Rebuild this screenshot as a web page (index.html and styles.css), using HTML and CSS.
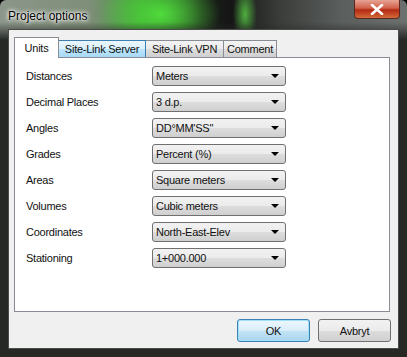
FILE: index.html
```html
<!DOCTYPE html>
<html lang="en">
<head>
    <meta charset="UTF-8">
    <title>Project options</title>
    <link rel="stylesheet" href="styles.css">
</head>
<body class="page">
<div class="window">
    <div class="titlebar">
        <span class="title">Project options</span>
        <div class="close-btn">
            <svg width="14" height="11" viewBox="0 0 14 11">
                <path d="M2 1 L12 10 M12 1 L2 10" stroke="#fff" stroke-width="2.6" stroke-linecap="round"/>
            </svg>
        </div>
    </div>
    <div class="client">
        <div class="tabs">
            <span class="tab tab-active">Units</span>
            <span class="tab tab-hover tab-server">Site-Link Server</span>
            <span class="tab tab-vpn">Site-Link VPN</span>
            <span class="tab tab-comment">Comment</span>
        </div>
        <div class="panel">
            <div class="row">
                <span class="label">Distances</span>
                <div class="combo"><span>Meters</span><i class="arrow"></i></div>
            </div>
            <div class="row">
                <span class="label">Decimal Places</span>
                <div class="combo"><span>3 d.p.</span><i class="arrow"></i></div>
            </div>
            <div class="row">
                <span class="label">Angles</span>
                <div class="combo"><span>DD°MM'SS"</span><i class="arrow"></i></div>
            </div>
            <div class="row">
                <span class="label">Grades</span>
                <div class="combo"><span>Percent (%)</span><i class="arrow"></i></div>
            </div>
            <div class="row">
                <span class="label">Areas</span>
                <div class="combo"><span>Square meters</span><i class="arrow"></i></div>
            </div>
            <div class="row">
                <span class="label">Volumes</span>
                <div class="combo"><span>Cubic meters</span><i class="arrow"></i></div>
            </div>
            <div class="row">
                <span class="label">Coordinates</span>
                <div class="combo"><span>North-East-Elev</span><i class="arrow"></i></div>
            </div>
            <div class="row">
                <span class="label">Stationing</span>
                <div class="combo"><span>1+000.000</span><i class="arrow"></i></div>
            </div>
        </div>
        <div class="buttons">
            <button class="btn btn-default">OK</button>
            <button class="btn">Avbryt</button>
        </div>
    </div>
</div>
</body>
</html>
```

FILE: styles.css
```css
.page {
    margin: 0;
    background: #000;
}

.window {
    width: 407px;
    height: 357px;
    box-sizing: border-box;
    padding: 0 8px 8px 8px;
    display: flex;
    flex-direction: column;
    background:
        linear-gradient(to bottom, rgba(0, 0, 0, 0) 0, rgba(0, 0, 0, 0) 22px, #262826 40px),
        radial-gradient(ellipse 12px 30px at 245px 14px, rgba(90, 210, 70, 0.8), rgba(90, 210, 70, 0) 100%),
        radial-gradient(ellipse 60px 40px at 160px 14px, rgba(80, 220, 60, 1), rgba(80, 220, 60, 0) 100%),
        linear-gradient(to right, #8c968a 0, #7e8e78 90px, #3f9a35 140px, #1e2a1c 200px, #141414 230px, #3a3d3a 280px, #5a5e5c 340px, #6c706e 407px);
    border-radius: 6px 6px 0 0;
    font-family: "Liberation Sans", Arial, sans-serif;
}

.titlebar {
    height: 29px;
    display: flex;
    align-items: flex-start;
    justify-content: space-between;
}

.title {
    margin-top: 9px;
    font-size: 12px;
    color: #000;
    text-shadow: 0 0 6px #fff, 0 0 4px #fff, 0 0 2px #fff;
}

.close-btn {
    width: 46px;
    height: 19px;
    margin-right: -1px;
    box-sizing: border-box;
    border: 1px solid #5a2a22;
    border-top: none;
    border-radius: 0 0 4px 4px;
    background: linear-gradient(to bottom, #e8a394 0, #d0614c 45%, #b42a12 55%, #d36a3a 100%);
    display: flex;
    align-items: center;
    justify-content: center;
}

.client {
    flex: 1;
    background: #f0f0f0;
    border: 1px solid #4a4c4a;
    padding: 7px 7px 5px 5px;
    display: flex;
    flex-direction: column;
    font-size: 11px;
    letter-spacing: -0.25px;
    color: #111;
}

.tabs {
    display: flex;
    align-items: flex-end;
    height: 20px;
    position: relative;
    z-index: 1;
}

.tab {
    height: 17px;
    box-sizing: border-box;
    padding: 2px 0 0 0;
    text-align: center;
    border: 1px solid #898c95;
    border-bottom: none;
    border-left: none;
    background: linear-gradient(to bottom, #f3f3f3 0, #ebebeb 50%, #dddddd 51%, #cfcfcf 100%);
}

.tab-server {
    width: 87px;
}

.tab-vpn {
    width: 78px;
}

.tab-comment {
    width: 53px;
}

.tab-active {
    height: 21px;
    width: 45px;
    margin-bottom: -1px;
    padding: 4px 0 0 0;
    border-left: 1px solid #898c95;
    background: #fff;
}

.tab-hover {
    background: linear-gradient(to bottom, #eaf6fd 0, #d9f0fc 50%, #bee6fd 51%, #a7d9f5 100%);
    border-color: #3c7fb1;
}

.panel {
    width: 376px;
    height: 255px;
    box-sizing: border-box;
    border: 1px solid #898c95;
    background: #fff;
    padding: 8px 0 0 11px;
    display: flex;
    flex-direction: column;
    gap: 6px;
}

.row {
    display: flex;
    align-items: center;
    height: 20px;
}

.label {
    width: 126px;
}

.combo {
    width: 134px;
    height: 20px;
    box-sizing: border-box;
    border: 1px solid #707070;
    border-radius: 3px;
    background: linear-gradient(to bottom, #f2f2f2 0, #ebebeb 50%, #dddddd 51%, #cfcfcf 100%);
    display: flex;
    align-items: center;
    justify-content: space-between;
    padding: 0 6px 0 3px;
}

.arrow {
    width: 0;
    height: 0;
    border-left: 4px solid transparent;
    border-right: 4px solid transparent;
    border-top: 4px solid #000;
}

.buttons {
    display: flex;
    justify-content: flex-end;
    gap: 8px;
    margin-top: 7px;
}

.btn {
    width: 73px;
    height: 23px;
    border: 1px solid #707070;
    border-radius: 3px;
    background: linear-gradient(to bottom, #f2f2f2 0, #ebebeb 50%, #dddddd 51%, #cfcfcf 100%);
    font-family: "Liberation Sans", Arial, sans-serif;
    font-size: 11px;
    letter-spacing: -0.25px;
    color: #111;
    padding: 0;
}

.btn-default {
    border-color: #3c7fb1;
    box-shadow: inset 0 0 0 1px #9fe0fb;
    background: linear-gradient(to bottom, #eef7fd 0, #d8edf9 50%, #c2e3f5 51%, #aad6ef 100%);
}
```
